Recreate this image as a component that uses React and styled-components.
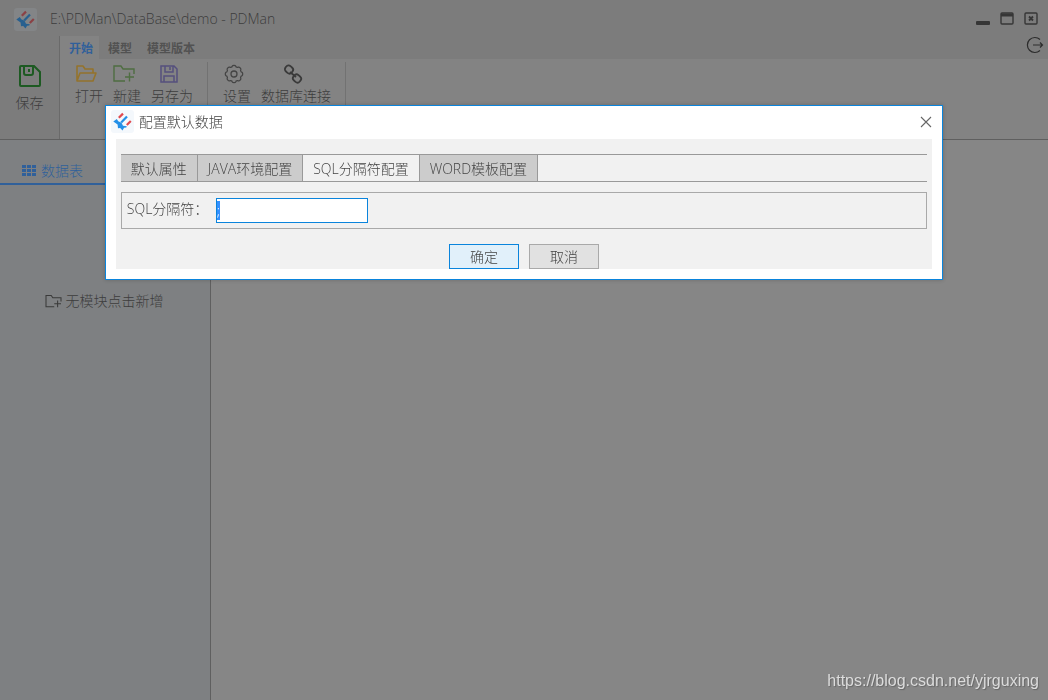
import React, { useEffect, useRef, useState } from 'react';
import styled, { ThemeProvider, createGlobalStyle } from 'styled-components';

const appTheme = {
  titleBar: '#7c7c7c',
  ribbon: '#838383',
  workspace: '#868686',
  sidebar: '#7e8082',
  line: '#5f5f5f',
  text: '#3d3d3d',
  dialogText: '#444',
  accent: '#0a84dc',
  accentDim: '#30609a',
  panel: '#f1f1f1',
  border: '#a9a9a9',
};

const GlobalStyle = createGlobalStyle`
  * {
    box-sizing: border-box;
  }

  body {
    margin: 0;
    font-family: 'Open Sans', 'Noto Sans CJK SC', sans-serif;
    font-size: 14px;
    font-weight: 300;
    line-height: 20px;
  }

  button,
  input {
    font: inherit;
    color: inherit;
  }
`;

const Page = styled.div`
  min-height: 100vh;
  display: flex;
  flex-direction: column;
  background-color: ${(props) => props.theme.workspace};
  color: ${(props) => props.theme.text};
`;

const TitleBar = styled.header`
  height: 36px;
  padding: 2px 10px 0 14px;
  display: flex;
  align-items: center;
  background-color: ${(props) => props.theme.titleBar};
`;

const LogoBox = styled.span`
  width: 23px;
  height: 23px;
  border-radius: 3px;
  display: flex;
  background-color: ${(props) => (props.$dim ? '#838587' : '#f4f8fc')};
`;

const WindowTitle = styled.h1`
  flex: 1;
  margin: 0 0 0 13px;
  font-size: 14px;
  font-weight: inherit;
`;

const IconButton = styled.button`
  padding: 0;
  border: 0;
  background: none;
  display: flex;
`;

const WindowButtons = styled.div`
  display: flex;
  gap: 10px;
`;

const Ribbon = styled.section`
  height: 104px;
  display: flex;
  border-bottom: 1px solid ${(props) => props.theme.line};
  background-color: ${(props) => props.theme.ribbon};
`;

const SaveButton = styled.button`
  width: 60px;
  padding: 2px 0 0;
  border: 0;
  border-right: 1px solid #6a6a6a;
  background-color: ${(props) => props.theme.titleBar};
  display: flex;
  flex-direction: column;
  align-items: center;
  justify-content: center;
  gap: 5px;
`;

const RibbonMain = styled.div`
  flex: 1;
`;

const RibbonTabs = styled.nav`
  height: 23px;
  padding-right: 4px;
  display: flex;
  background-color: ${(props) => props.theme.titleBar};
`;

const RibbonTab = styled.button`
  padding: 2px 6px 0 9px;
  border: 0;
  font-size: 12px;
  font-weight: bold;
  color: ${(props) => (props.$active ? props.theme.accentDim : '#525252')};
  background-color: ${(props) => (props.$active ? props.theme.ribbon : 'transparent')};
`;

const ExitButton = styled(IconButton)`
  margin-left: auto;
`;

const Tools = styled.div`
  display: flex;
  padding-top: 3px;
`;

const ToolGroup = styled.div`
  height: 76px;
  padding: 0 14px 0 15px;
  display: flex;
  align-items: flex-start;
  gap: 10px;
  border-right: 1px solid #727272;
`;

const ToolButton = styled.button`
  padding: 0;
  border: 0;
  background: none;
  display: flex;
  flex-direction: column;
  align-items: center;

  svg {
    margin: 2px 6px 2px 0;
  }
`;

const Content = styled.main`
  flex: 1;
  display: flex;
`;

const Sidebar = styled.aside`
  width: 211px;
  border-right: 1px solid ${(props) => props.theme.line};
  background-color: ${(props) => props.theme.sidebar};
`;

const SidebarTab = styled.button`
  width: 50%;
  height: 45px;
  padding: 18px 0 0;
  border: 0;
  border-bottom: 2px solid ${(props) => props.theme.accentDim};
  background: none;
  color: ${(props) => props.theme.accentDim};
  display: flex;
  align-items: center;
  justify-content: center;
  gap: 4px;
`;

const AddModule = styled.button`
  width: 100%;
  margin-top: 106px;
  padding: 0 2px 0 0;
  border: 0;
  background: none;
  display: flex;
  align-items: center;
  justify-content: center;
  gap: 4px;
`;

const Overlay = styled.div`
  position: fixed;
  inset: 0;
  padding-top: 15vh;
  color: ${(props) => props.theme.dialogText};
`;

const Dialog = styled.section`
  width: 80%;
  margin: 0 auto;
  padding: 0 10px 10px;
  border: 1px solid ${(props) => props.theme.accent};
  background-color: #fff;
  box-shadow: 0 0 4px rgba(0, 0, 0, 0.2);
`;

const DialogHeader = styled.header`
  height: 33px;
  margin: 0 0 0 -5px;
  padding-bottom: 2px;
  display: flex;
  align-items: center;
`;

const DialogTitle = styled.h2`
  flex: 1;
  margin: 0 0 0 5px;
  font-size: 14px;
  font-weight: inherit;
`;

const DialogBody = styled.div`
  padding: 15px 5px 0;
  background-color: ${(props) => props.theme.panel};
`;

const ConfigTabs = styled.div`
  height: 28px;
  display: flex;
  border-top: 1px solid #999;
  border-bottom: 1px solid #999;
`;

const ConfigTab = styled.button`
  padding: 2px 10px 0;
  border: 0;
  border-right: 1px solid #999;
  background-color: ${(props) => (props.$active ? props.theme.panel : '#ccc')};
`;

const FormRow = styled.div`
  height: 37px;
  margin-top: 10px;
  padding: 0 5px;
  display: flex;
  align-items: center;
  border: 1px solid ${(props) => props.theme.border};
`;

const FieldLabel = styled.label`
  width: 89px;
  padding-bottom: 4px;
`;

const TextField = styled.input`
  width: 152px;
  height: 25px;
  padding: 0;
  border: 1px solid ${(props) => props.theme.accent};
  outline: 0;
  background-color: #fff;

  &::selection {
    background-color: #3390ff;
    color: #fff;
  }
`;

const DialogFooter = styled.footer`
  margin-top: 15px;
  display: flex;
  justify-content: center;
  gap: 10px;
`;

const Button = styled.button`
  width: 70px;
  height: 25px;
  padding: 0;
  border: 1px solid ${(props) => (props.$primary ? props.theme.accent : props.theme.border)};
  background-color: ${(props) => (props.$primary ? '#e1f0fa' : '#e1e1e1')};
`;

const Watermark = styled.a`
  position: fixed;
  right: 9px;
  bottom: 9px;
  font-family: 'Liberation Sans', sans-serif;
  font-size: 16px;
  font-weight: 400;
  color: #dcdcdc;
  text-decoration: none;
  text-shadow: 1px 1px 1px #666;
`;

function Logo({ dim }) {
  const blue = dim ? '#28608f' : '#2490e8';
  const red = dim ? '#8b4145' : '#e04a50';

  return (
    <LogoBox $dim={dim}>
      <svg width="23" height="23" viewBox="0 0 23 23" fill="none" strokeWidth="2.2">
        <path d="M7.800 7.800L12 3.600M15.800 15L19.800 11" stroke={red} />
        <path d="M10.200 12.600L16 6.400" stroke={blue} />
        <path d="M2.300 11.500L5.800 9l1.400 2.200 3.300 1.600 1.500 3 3.800.4-.5 1.400-2.200.2-1.600 2.600-2.300-2.500-2.200.3-.4-3.600z" fill={blue} />
      </svg>
    </LogoBox>
  );
}

function SaveIcon() {
  return (
    <svg width="24" height="24" viewBox="0 0 24 24" fill="none" stroke="#1d5a22" strokeWidth="2">
      <path d="M3 2h13l6 6v13q0 1-1 1H3q-1 0-1-1V3q0-1 1-1z" />
      <path d="M6 2v7q0 2 2 2h5q2 0 2-2V2" />
      <path d="M11 5v3" />
    </svg>
  );
}

function OpenIcon() {
  return (
    <svg width="22" height="20" viewBox="0 0 22 20" fill="none" stroke="#94732c" strokeWidth="1.6">
      <path d="M2 17V2h6l2 3h8v4M2 17L5 9h16l-3 8z" strokeLinejoin="round" />
    </svg>
  );
}

function NewFolderIcon({ color, size }) {
  return (
    <svg width={size} height={size - 2} viewBox="0 0 22 20" fill="none" stroke={color} strokeWidth="1.4">
      <path d="M12 17H1V2h7l2 3h11v5M12 13h9M16.500 8.500v9" />
    </svg>
  );
}

function DiskIcon() {
  return (
    <svg width="20" height="20" viewBox="0 0 20 20" fill="none" stroke="#55507e" strokeWidth="1.5">
      <path d="M2 2h13l3 3v13H2zM6 2v6h8V2M5 18v-6h10v6M11 3v3" />
    </svg>
  );
}

function GearIcon() {
  const angles = [0, 45, 90, 135, 180, 225, 270, 315];

  return (
    <svg width="20" height="20" viewBox="0 0 20 20" fill="none" stroke="#444" strokeWidth="1.3">
      {angles.map((angle) => (
        <path
          key={angle}
          d="M7.200 3.300Q7.900 3 8.200 2.200Q8.600 1.300 10 1.300Q11.400 1.300 11.800 2.200Q12.100 3 12.800 3.300"
          transform={`rotate(${angle} 10 10)`}
        />
      ))}
      <circle cx="10" cy="10" r="3" />
    </svg>
  );
}

function LinkIcon() {
  return (
    <svg width="20" height="20" viewBox="0 0 20 20" fill="none" stroke="#3a3a3a" strokeWidth="1.8">
      <rect x="2" y="2" width="8" height="7" rx="3" transform="rotate(40 6 5.500)" />
      <rect x="10" y="11" width="8" height="7" rx="3" transform="rotate(40 14 14.500)" />
      <path d="M7 8l6 5" />
    </svg>
  );
}

function GridIcon() {
  return (
    <svg width="15" height="12" viewBox="0 0 15 12" fill="currentColor">
      {[0, 4, 8].map((y) => [0, 5, 10].map((x) => (
        <rect key={`${x}-${y}`} x={x} y={y} width="4" height="3" />
      )))}
    </svg>
  );
}

const configTabs = ['默认属性', 'JAVA环境配置', 'SQL分隔符配置', 'WORD模板配置'];

function App() {
  const [ribbonTab, setRibbonTab] = useState('开始');
  const [configTab, setConfigTab] = useState('SQL分隔符配置');
  const [separator, setSeparator] = useState(';');
  const separatorInput = useRef(null);

  useEffect(() => {
    separatorInput.current.focus();
    separatorInput.current.select();
  }, []);

  return (
    <ThemeProvider theme={appTheme}>
      <GlobalStyle />
      <Page>
        <TitleBar>
          <Logo dim />
          <WindowTitle>E:\PDMan\DataBase\demo - PDMan</WindowTitle>
          <WindowButtons>
            <IconButton aria-label="最小化">
              <svg width="14" height="14" viewBox="0 0 14 14" fill="#363636">
                <rect y="9" width="14" height="4" rx="1" />
              </svg>
            </IconButton>
            <IconButton aria-label="最大化">
              <svg width="14" height="14" viewBox="0 0 14 14" fill="none" stroke="#363636" strokeWidth="1.4">
                <rect x="1" y="1" width="12" height="11" rx="1" />
                <path d="M1 3h12" strokeWidth="3" />
              </svg>
            </IconButton>
            <IconButton aria-label="关闭">
              <svg width="14" height="14" viewBox="0 0 14 14" fill="none" stroke="#363636" strokeWidth="1.4">
                <rect x="1" y="1" width="12" height="11" rx="1" />
                <path d="M5 4.500l4 4M9 4.500l-4 4" strokeWidth="1.800" />
              </svg>
            </IconButton>
          </WindowButtons>
        </TitleBar>

        <Ribbon>
          <SaveButton>
            <SaveIcon />
            保存
          </SaveButton>
          <RibbonMain>
            <RibbonTabs>
              {['开始', '模型', '模型版本'].map((tab) => (
                <RibbonTab key={tab} $active={tab === ribbonTab} onClick={() => setRibbonTab(tab)}>
                  {tab}
                </RibbonTab>
              ))}
              <ExitButton aria-label="退出">
                <svg width="18" height="18" viewBox="0 0 18 18" fill="none" stroke="#2c2c2c" strokeWidth="1.2">
                  <path d="M14 3.500A7.500 7.500 0 1 0 14 14.500M7 9h9.500M14 6.500L16.500 9 14 11.500" />
                </svg>
              </ExitButton>
            </RibbonTabs>
            <Tools>
              <ToolGroup>
                <ToolButton><OpenIcon />打开</ToolButton>
                <ToolButton><NewFolderIcon color="#4f6e42" size={22} />新建</ToolButton>
                <ToolButton><DiskIcon />另存为</ToolButton>
              </ToolGroup>
              <ToolGroup>
                <ToolButton><GearIcon />设置</ToolButton>
                <ToolButton><LinkIcon />数据库连接</ToolButton>
              </ToolGroup>
            </Tools>
          </RibbonMain>
        </Ribbon>

        <Content>
          <Sidebar>
            <SidebarTab>
              <GridIcon />
              数据表
            </SidebarTab>
            <AddModule>
              <NewFolderIcon color="#3a3a3a" size={17} />
              无模块点击新增
            </AddModule>
          </Sidebar>
        </Content>
      </Page>

      <Overlay>
        <Dialog role="dialog" aria-labelledby="dialog-title">
          <DialogHeader>
            <Logo />
            <DialogTitle id="dialog-title">配置默认数据</DialogTitle>
            <IconButton aria-label="关闭">
              <svg width="12" height="12" viewBox="0 0 12 12" stroke="#666" strokeWidth="1.1">
                <path d="M1 1l10 10M11 1L1 11" />
              </svg>
            </IconButton>
          </DialogHeader>
          <DialogBody>
            <ConfigTabs>
              {configTabs.map((tab) => (
                <ConfigTab key={tab} $active={tab === configTab} onClick={() => setConfigTab(tab)}>
                  {tab}
                </ConfigTab>
              ))}
            </ConfigTabs>
            <FormRow>
              <FieldLabel htmlFor="separator">SQL分隔符：</FieldLabel>
              <TextField
                id="separator"
                type="text"
                ref={separatorInput}
                value={separator}
                onChange={(event) => setSeparator(event.target.value)}
              />
            </FormRow>
            <DialogFooter>
              <Button $primary>确定</Button>
              <Button>取消</Button>
            </DialogFooter>
          </DialogBody>
        </Dialog>
      </Overlay>

      <Watermark href="https://blog.csdn.net/yjrguxing">https://blog.csdn.net/yjrguxing</Watermark>
    </ThemeProvider>
  );
}

export default App;
